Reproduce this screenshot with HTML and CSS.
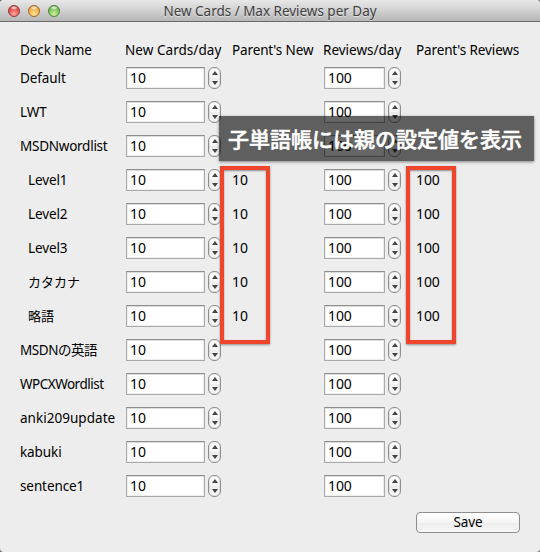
FILE: index.html
```
<!DOCTYPE html>
<html lang="ja">
<head>
<meta charset="utf-8">
<title>New Cards / Max Reviews per Day</title>
<link rel="stylesheet" href="styles.css">
</head>
<body>
<div class="window">
  <header class="titlebar">
    <div class="lights"><i class="light red"></i><i class="light amber"></i><i class="light green"></i></div>
    <h1 class="title">New Cards / Max Reviews per Day</h1>
  </header>
  <main class="content">
    <div class="row head"><span class="deck-head">Deck Name</span><span class="new-head">New Cards/day</span><span class="parent-head">Parent's New</span><span class="rev-head">Reviews/day</span><span class="parent-head">Parent's Reviews</span></div>
    <div class="row"><span>Default</span><div class="spin"><b>10</b><i></i></div><span></span><div class="spin"><b>100</b><i></i></div><span></span></div>
    <div class="row"><span>LWT</span><div class="spin"><b>10</b><i></i></div><span></span><div class="spin"><b>100</b><i></i></div><span></span></div>
    <div class="row"><span class="msdn">MSDNwordlist</span><div class="spin"><b>10</b><i></i></div><span></span><div class="spin"><b>100</b><i></i></div><span></span></div>
    <div class="row"><span class="child">Level1</span><div class="spin"><b>10</b><i></i></div><span class="num">10</span><div class="spin"><b>100</b><i></i></div><span class="num">100</span></div>
    <div class="row"><span class="child">Level2</span><div class="spin"><b>10</b><i></i></div><span class="num">10</span><div class="spin"><b>100</b><i></i></div><span class="num">100</span></div>
    <div class="row"><span class="child">Level3</span><div class="spin"><b>10</b><i></i></div><span class="num">10</span><div class="spin"><b>100</b><i></i></div><span class="num">100</span></div>
    <div class="row"><span class="child jp">カタカナ</span><div class="spin"><b>10</b><i></i></div><span class="num">10</span><div class="spin"><b>100</b><i></i></div><span class="num">100</span></div>
    <div class="row"><span class="child jp">略語</span><div class="spin"><b>10</b><i></i></div><span class="num">10</span><div class="spin"><b>100</b><i></i></div><span class="num">100</span></div>
    <div class="row"><span class="mixed">MSDNの英語</span><div class="spin"><b>10</b><i></i></div><span></span><div class="spin"><b>100</b><i></i></div><span></span></div>
    <div class="row"><span class="wpcx">WPCXWordlist</span><div class="spin"><b>10</b><i></i></div><span></span><div class="spin"><b>100</b><i></i></div><span></span></div>
    <div class="row"><span class="anki">anki209update</span><div class="spin"><b>10</b><i></i></div><span></span><div class="spin"><b>100</b><i></i></div><span></span></div>
    <div class="row"><span>kabuki</span><div class="spin"><b>10</b><i></i></div><span></span><div class="spin"><b>100</b><i></i></div><span></span></div>
    <div class="row"><span>sentence1</span><div class="spin"><b>10</b><i></i></div><span></span><div class="spin"><b>100</b><i></i></div><span></span></div>
    <footer class="actions"><button class="save">Save</button></footer>
  </main>
  <div class="callout">子単語帳には親の設定値を表示</div>
  <div class="marker marker-new"></div>
  <div class="marker marker-reviews"></div>
</div>
</body>
</html>
```
FILE: styles.css
```
* { box-sizing: border-box; }
body {
  margin: 0;
  background: #777;
  font: 13.5px/20px "Noto Sans", "Noto Sans CJK JP", sans-serif;
  letter-spacing: -.1px;
  color: #000;
}
.window {
  position: relative;
  width: 540px;
  height: 552px;
  overflow: hidden;
  background: #ededed;
  border-radius: 4px;
}
.titlebar {
  display: grid;
  grid-template-columns: 60px 1fr 60px;
  height: 22px;
  padding: 0 8px;
  border-bottom: 1px solid #6a6a6a;
  background: linear-gradient(#e8e8e8, #d0d0d0 50%, #b6b6b6);
}
.lights { display: flex; gap: 8px; padding-top: 5px; }
.light {
  width: 12px;
  height: 12px;
  border: 1px solid;
  border-radius: 50%;
}
.red { border-color: #943a38; background: radial-gradient(ellipse 4px 2px at 50% 18%, #fff, transparent), radial-gradient(circle at 50% 80%, #ffaaa4, #df4746 65%, #b83334); }
.amber { border-color: #a5692b; background: radial-gradient(ellipse 4px 2px at 50% 18%, #fff, transparent), radial-gradient(circle at 50% 80%, #ffe699, #eda942 65%, #c67d2b); }
.green { border-color: #4f853b; background: radial-gradient(ellipse 4px 2px at 50% 18%, #fff, transparent), radial-gradient(circle at 50% 80%, #ccf3a0, #75bc58 65%, #4c9439); }
.title {
  margin: 0;
  font-size: 13.5px;
  font-weight: 400;
  line-height: 22px;
  letter-spacing: -.02px;
  text-align: center;
  white-space: nowrap;
  color: #404040;
  text-shadow: 0 1px 0 rgba(255,255,255,.5);
}
.content { padding: 17px 20px 0; }
.row {
  display: grid;
  grid-template-columns: 106px 106px 92px 92px 104px;
  align-items: center;
  height: 34px;
  white-space: nowrap;
}
.head { height: 22px; }
.new-head { margin-left: -1px; letter-spacing: .05px; }
.rev-head { margin-left: -1px; letter-spacing: 0; }
.parent-head { letter-spacing: -.13px; }
.deck-head { letter-spacing: -.1px; }
.msdn { letter-spacing: -.25px; }
.wpcx { letter-spacing: -.5px; }
.anki { letter-spacing: .03px; }
.mixed { letter-spacing: -.45px; }
.child { padding-left: 8px; }
.jp { font-size: 13px; letter-spacing: 0; }
.num { font-size: 14px; letter-spacing: -.1px; }
.spin {
  display: grid;
  grid-template-columns: 1fr 13px;
  column-gap: 3px;
  height: 22px;
  width: 95px;
}
.row .spin:nth-child(4) { width: 77px; }
.spin b {
  border: 1px solid #a9a9a9;
  border-top-color: #8f8f8f;
  background: #fff;
  box-shadow: inset 0 1px 0 #ddd, inset 0 0 0 1px #eee;
  padding-left: 3px;
  font-size: 14px;
  font-weight: 400;
  letter-spacing: -.1px;
}
.spin i {
  display: flex;
  flex-direction: column;
  align-items: center;
  justify-content: space-between;
  padding: 3px 0;
  border: 1px solid #8e8e8e;
  border-radius: 6px;
  background: linear-gradient(#fff, #f6f6f6 50%, #ececec 51%, #fafafa);
  box-shadow: inset 0 0 0 1px rgba(0,0,0,.08);
}
.spin i::before, .spin i::after {
  content: "";
  border: 0 solid transparent;
  border-width: 0 2.5px;
}
.spin i::before { border-width: 0 3px 4px; border-bottom-color: #444; }
.spin i::after { border-width: 4px 3px 0; border-top-color: #444; }
.actions { display: flex; justify-content: flex-end; padding-top: 9px; }
.save {
  width: 104px;
  height: 21px;
  padding: 0;
  border: 1px solid #8e8e8e;
  border-radius: 4px;
  background: linear-gradient(#fff, #f5f5f5 50%, #ececec 51%, #f8f8f8);
  font: inherit;
  line-height: 19px;
  letter-spacing: -.1px;
  color: #000;
}
.callout {
  position: absolute;
  left: 219px;
  top: 116px;
  width: 315px;
  height: 45px;
  padding-left: 9px;
  background: rgba(0,0,0,.6);
  box-shadow: 0 1px 3px rgba(0,0,0,.45);
  color: #fff;
  font: 500 21px/44px "Noto Sans CJK JP", sans-serif;
  -webkit-text-stroke: .5px #fff;
  letter-spacing: 0;
  white-space: nowrap;
}
.marker {
  position: absolute;
  top: 166px;
  width: 50px;
  height: 178px;
  border: 4px solid #ee452c;
  box-shadow: 0 1px 2px rgba(0,0,0,.4), inset 0 1px 2px rgba(0,0,0,.4);
}
.marker-new { left: 220px; }
.marker-reviews { left: 406px; }
```
